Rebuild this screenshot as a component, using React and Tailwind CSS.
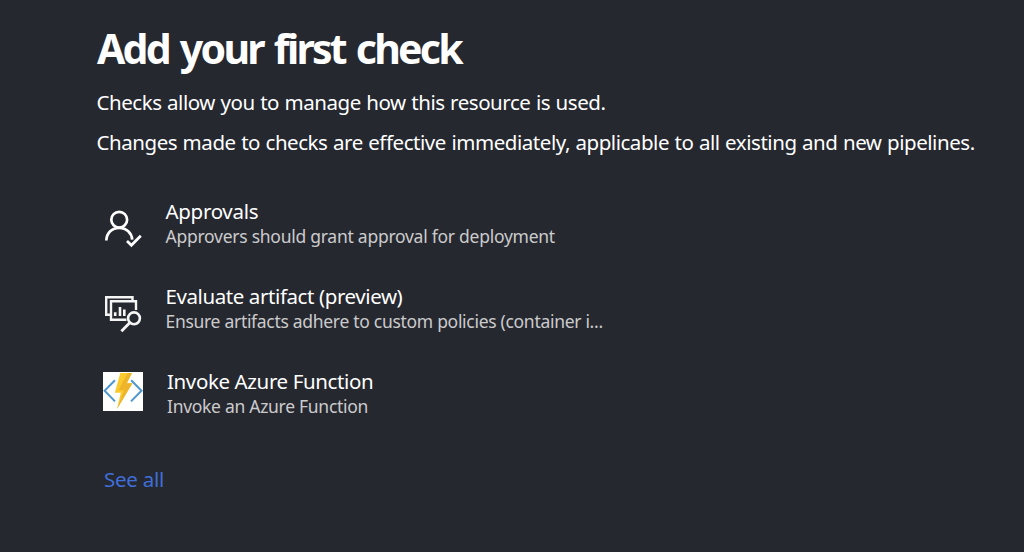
function ApprovalIcon() {
  return (
    <svg className="mt-3 h-10 w-10 shrink-0" viewBox="0 0 40 40" fill="none" stroke="#fff" strokeWidth="2.7">
      <circle cx="16.2" cy="10.7" r="7.9" />
      <path d="M3.3 31.5C3.6 24 9 18.8 16.2 18.8S28.8 24 29.2 30.6" />
      <path d="M24 32l4.4 4.3 9.4-9.6" />
    </svg>
  );
}

function ArtifactIcon() {
  return (
    <svg className="mt-3 h-10 w-10 shrink-0" viewBox="0 0 40 40" fill="none" stroke="#f5f5f5" strokeWidth="2.4">
      <path d="M7.5 20.8H3.2V3.2h26.3v3.6" />
      <path d="M23.5 25.8H8V7.2h25V16" />
      <path d="M12.2 18.2V22M17 13v9M21.3 15.5V22" strokeWidth="2.6" />
      <circle cx="31" cy="24.3" r="5.9" strokeWidth="2.6" />
      <path d="M27 28.5l-8.6 8.7" strokeWidth="2.8" />
    </svg>
  );
}

function FunctionIcon() {
  return (
    <svg className="mt-[5px] h-[39px] w-10 shrink-0 bg-white" viewBox="0 0 40 39" fill="none">
      <path d="M12 8.3L1.6 18.8 12 29.4M28.2 8.3l10.3 10.5L28 29.4" stroke="#4f97cc" strokeWidth="2" />
      <path d="M17.3 1H29l-5.2 10.3h5.6L14 37l3.8-16.3h-6z" fill="#fbcb2e" />
      <path d="M29 1l-5.2 10.3h5.6L14 37l7-18.8h-5.6L24.5 1z" fill="#eeb52b" />
    </svg>
  );
}

const checks = [
  {
    title: "Approvals",
    detail: "Approvers should grant approval for deployment",
    Icon: ApprovalIcon,
    text: "pl-[22.5px]",
    titleSpacing: "tracking-[-0.3px]",
    detailSpacing: "tracking-[-0.26px]",
  },
  {
    title: "Evaluate artifact (preview)",
    detail: "Ensure artifacts adhere to custom policies (container i...",
    Icon: ArtifactIcon,
    text: "pl-[22.5px]",
    titleSpacing: "tracking-[-0.41px]",
    detailSpacing: "tracking-[-0.3px]",
  },
  {
    title: "Invoke Azure Function",
    detail: "Invoke an Azure Function",
    Icon: FunctionIcon,
    text: "pl-6",
    titleSpacing: "tracking-[-0.38px]",
    detailSpacing: "tracking-[-0.29px]",
  },
];

export default function App() {
  return (
    <main className="h-[552px] w-full overflow-hidden bg-[#262830] pt-[22px] pl-24 font-['Noto_Sans',sans-serif] text-[20.5px] whitespace-nowrap text-white">
      <h1 className="pl-px text-[41px] leading-[52px] font-bold tracking-[-2.75px] [word-spacing:3px]">Add your first check</h1>
      <div className="mt-2 pl-[0.5px] leading-10 tracking-[-0.45px] [word-spacing:0.6px]">
        <p>Checks allow you to manage how this resource is used.</p>
        <p>Changes made to checks are effective immediately, applicable to all existing and new pipelines.</p>
      </div>
      <ul className="mt-[35px] flex flex-col gap-[35px] pl-[7px]">
        {checks.map(({ title, detail, Icon, text, titleSpacing, detailSpacing }) => (
          <li key={title} className="flex h-[50px] items-start">
            <Icon />
            <div className={text}>
              <div className={`leading-7 ${titleSpacing}`}>{title}</div>
              <div className={`text-[17.5px] leading-[22px] text-[#cbcbcc] ${detailSpacing}`}>{detail}</div>
            </div>
          </li>
        ))}
      </ul>
      <a href="#" className="mt-12 ml-2 inline-block leading-7 tracking-[-0.25px] text-[#3f6fd8]">See all</a>
    </main>
  );
}
